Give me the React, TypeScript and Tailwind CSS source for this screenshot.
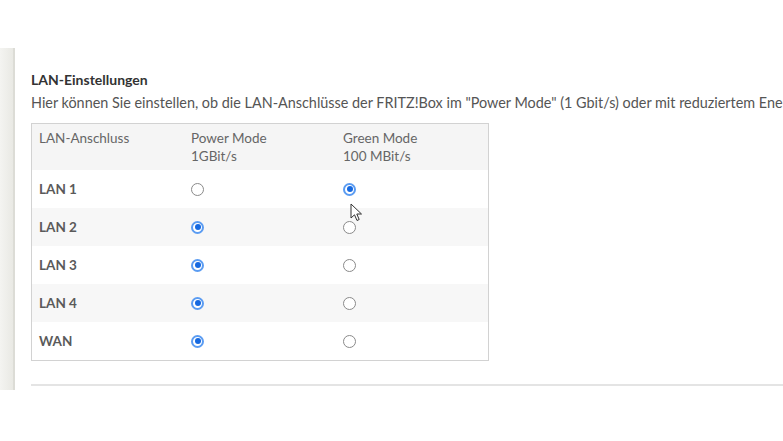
import React from "react";

const rows = [
	{ name: "LAN 1", green: true },
	{ name: "LAN 2", green: false },
	{ name: "LAN 3", green: false },
	{ name: "LAN 4", green: false },
	{ name: "WAN", green: false }
];

function Radio({ checked }: { checked: boolean }) {
	if (checked) {
		return (
			<span className="flex size-[13px] items-center justify-center rounded-full border-2 border-[#5b9cf2] bg-white">
				<span className="size-[6px] rounded-full bg-[#1669e0]" />
			</span>
		);
	}
	return <span className="block size-[13px] rounded-full border border-[#8a8a8a] bg-white" />;
}

function Cursor() {
	return (
		<svg className="absolute left-[350px] top-[203px]" width="14" height="20" viewBox="0 0 14 20">
			<path d="M1 1 L1 15 L4.5 11.8 L7 17.5 L9.2 16.5 L6.8 11 L11.5 11 Z" fill="#fff" stroke="#333" strokeWidth="1" strokeLinejoin="round" />
		</svg>
	);
}

export default function App() {
	return (
		<div className="relative h-[441px] w-[783px] overflow-hidden bg-white font-['Lato',sans-serif]">
			<div className="mt-[48px] flex h-[342px]">
				{/* side strip */}
				<div className="w-[15px] shrink-0 border-r-2 border-[#dcdcd6] bg-gradient-to-r from-[#f4f4f1] to-[#e9e9e4]" />

				<div className="min-w-0 flex-1 overflow-hidden pl-[16px] pt-[23px]">
					<h2 className="text-[14px] leading-[18px] font-bold text-[#333]">LAN-Einstellungen</h2>
					<p className="mt-[4px] whitespace-nowrap text-[14.4px] leading-[20px] text-[#555]">
						Hier können Sie einstellen, ob die LAN-Anschlüsse der FRITZ!Box im "Power Mode" (1 Gbit/s) oder mit reduziertem Energieverbrauch im "Green Mode" betrieben werden.
					</p>

					<div className="mt-[10px] w-[458px] border border-[#d2d2d2] text-[13.5px] text-[#666]">
						<div className="grid h-[46px] grid-cols-[151px_152px_1fr] bg-[#f5f5f5] pt-[5px] leading-[18px]">
							<div className="pl-[7px]">LAN-Anschluss</div>
							<div className="pl-[8px]">
								<div>Power Mode</div>
								<div>1GBit/s</div>
							</div>
							<div className="pl-[8px]">
								<div>Green Mode</div>
								<div>100 MBit/s</div>
							</div>
						</div>
						{rows.map((row, i) => (
							<div
								key={row.name}
								className={`grid h-[38px] grid-cols-[151px_152px_1fr] items-center ${i % 2 === 1 ? "bg-[#f7f7f7]" : "bg-white"}`}
							>
								<div className="pl-[7px] font-bold text-[#5a5a5a]">{row.name}</div>
								<div className="pl-[8px]">
									<Radio checked={!row.green} />
								</div>
								<div className="pl-[8px]">
									<Radio checked={row.green} />
								</div>
							</div>
						))}
					</div>

					<div className="mt-[23px] h-[2px] bg-[#e4e4e4]" />
				</div>
			</div>
			<Cursor />
		</div>
	);
}
